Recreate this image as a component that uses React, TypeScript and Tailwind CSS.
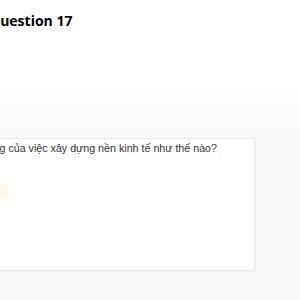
export default function App() {
  return (
    <div className="relative w-[300px] h-[300px] overflow-hidden bg-gradient-to-b from-white from-[28%] to-[#f8f9fa] to-[46%]">
      <h1 className="pt-[11px] ml-[-11px] whitespace-nowrap text-[14px] leading-[20px] font-bold text-black font-['Open_Sans',sans-serif]">
        Question 17
      </h1>
      <div className="mt-[107px] ml-[-20px] w-[275px] h-[133px] bg-white border border-[#e8eaed] shadow-[1px_1px_1px_rgba(0,0,0,0.03)]">
        <div className="flex justify-end w-[236px] pt-[1px]">
          <p className="whitespace-nowrap text-[10.7px] leading-[16px] text-[#333] font-['Liberation_Sans',Arial,sans-serif]">
            Tầm quan trọng của việc xây dựng nền kinh tế như thế nào?
          </p>
        </div>
        <div className="mt-[26px] ml-[17px] w-[13px] h-[18px] rounded-full bg-[#fdf3dc] blur-[3px] opacity-60" />
      </div>
    </div>
  );
}
